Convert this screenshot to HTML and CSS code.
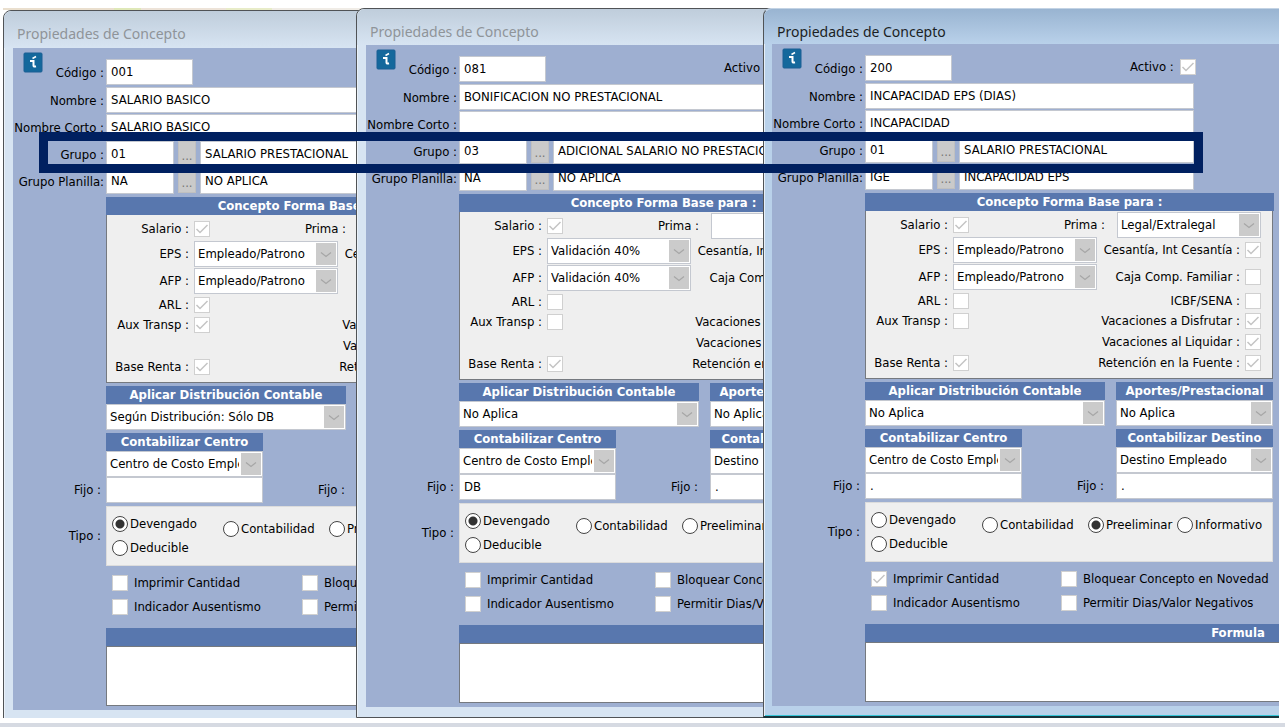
FILE: index.html
```html
<!DOCTYPE html>
<html lang="es">
<head>
    <meta charset="UTF-8">
    <title>Propiedades de Concepto</title>
    <link rel="stylesheet" href="styles.css">
</head>
<body>
<div class="desktop">
    <div class="strip"></div>

    <section class="window first">
        <h2 class="title">Propiedades de Concepto</h2>
        <form class="form">
            <svg class="info" viewBox="0 0 20 21"><rect x="1" y="1" width="18" height="19" rx="1" fill="#14689c" stroke="#1b5f94"/><path d="M9.500 6.500l3.500-2" stroke="#fff" stroke-width="1.500" fill="none"/><path d="M7 9h3.500v4.500q.2 1.500 2.500.8" stroke="#fff" stroke-width="2" fill="none"/></svg>
            <div class="row code">
                <label class="field"><span>Código :</span><input class="mid" type="text" value="001"></label>
            </div>
            <div class="row">
                <label class="field"><span>Nombre :</span><input class="long" type="text" value="SALARIO BASICO"></label>
            </div>
            <div class="row">
                <label class="field"><span>Nombre Corto :</span><input class="long" type="text" value="SALARIO BASICO"></label>
            </div>
            <div class="row">
                <label class="field"><span>Grupo :</span><input class="short" type="text" value="01"></label>
                <button type="button" class="more">...</button>
                <input class="desc" type="text" aria-label="Nombre del grupo" value="SALARIO PRESTACIONAL">
            </div>
            <div class="row">
                <label class="field"><span>Grupo Planilla:</span><input class="short" type="text" value="NA"></label>
                <button type="button" class="more">...</button>
                <input class="desc" type="text" aria-label="Nombre del grupo planilla" value="NO APLICA">
            </div>

            <div class="content">
                <h3 class="head">Concepto Forma Base para :</h3>
                <div class="base">
                    <label class="opt"><span>Salario :</span><input type="checkbox" checked></label>
                    <label class="opt right prima"><span>Prima :</span><select><option>Legal/Extralegal</option></select></label>
                    <label class="opt"><span>EPS :</span><select><option>Empleado/Patrono</option></select></label>
                    <label class="opt right"><span>Cesantía, Int Cesantía :</span><input type="checkbox"></label>
                    <label class="opt"><span>AFP :</span><select><option>Empleado/Patrono</option></select></label>
                    <label class="opt right"><span>Caja Comp. Familiar :</span><input type="checkbox"></label>
                    <label class="opt"><span>ARL :</span><input type="checkbox" checked></label>
                    <label class="opt right"><span>ICBF/SENA :</span><input type="checkbox"></label>
                    <label class="opt"><span>Aux Transp :</span><input type="checkbox" checked></label>
                    <label class="opt right"><span>Vacaciones a Disfrutar :</span><input type="checkbox"></label>
                    <label class="opt right second"><span>Vacaciones al Liquidar :</span><input type="checkbox"></label>
                    <label class="opt"><span>Base Renta :</span><input type="checkbox" checked></label>
                    <label class="opt right"><span>Retención en la Fuente :</span><input type="checkbox"></label>
                </div>
                <div class="pair">
                    <label class="block"><span class="head">Aplicar Distribución Contable</span><select><option>Según Distribución: Sólo DB</option></select></label>
                </div>
                <div class="pair">
                    <label class="block narrow"><span class="head">Contabilizar Centro</span><select><option>Centro de Costo Empleado</option></select></label>
                </div>
            </div>
            <div class="fijo">
                <label><span>Fijo :</span><input type="text"></label>
                <label class="dest"><span>Fijo :</span><input type="text"></label>
            </div>
            <fieldset class="tipo">
                <legend>Tipo :</legend>
                <div class="radios">
                    <div>
                        <label><input type="radio" name="tipo1" checked>Devengado</label>
                        <label><input type="radio" name="tipo1">Deducible</label>
                    </div>
                    <label><input type="radio" name="tipo1">Contabilidad</label>
                    <label><input type="radio" name="tipo1">Preeliminar</label>
                </div>
            </fieldset>
            <div class="content">
                <div class="flags">
                    <label><input type="checkbox">Imprimir Cantidad</label>
                    <label><input type="checkbox">Bloquear Concepto en Novedad</label>
                    <label><input type="checkbox">Indicador Ausentismo</label>
                    <label><input type="checkbox">Permitir Dias/Valor Negativos</label>
                </div>
                <label class="formula"><span class="head">Formula</span><textarea></textarea></label>
            </div>
        </form>
    </section>

    <section class="window middle">
        <h2 class="title">Propiedades de Concepto</h2>
        <form class="form">
            <svg class="info" viewBox="0 0 20 21"><rect x="1" y="1" width="18" height="19" rx="1" fill="#14689c" stroke="#1b5f94"/><path d="M9.500 6.500l3.500-2" stroke="#fff" stroke-width="1.500" fill="none"/><path d="M7 9h3.500v4.500q.2 1.500 2.500.8" stroke="#fff" stroke-width="2" fill="none"/></svg>
            <div class="row code">
                <label class="field"><span>Código :</span><input class="mid" type="text" value="081"></label>
                <label class="activo">Activo : <input type="checkbox" checked></label>
            </div>
            <div class="row">
                <label class="field"><span>Nombre :</span><input class="long" type="text" value="BONIFICACION NO PRESTACIONAL"></label>
            </div>
            <div class="row">
                <label class="field"><span>Nombre Corto :</span><input class="long" type="text"></label>
            </div>
            <div class="row">
                <label class="field"><span>Grupo :</span><input class="short" type="text" value="03"></label>
                <button type="button" class="more">...</button>
                <input class="desc" type="text" aria-label="Nombre del grupo" value="ADICIONAL SALARIO NO PRESTACIONAL">
            </div>
            <div class="row">
                <label class="field"><span>Grupo Planilla:</span><input class="short" type="text" value="NA"></label>
                <button type="button" class="more">...</button>
                <input class="desc" type="text" aria-label="Nombre del grupo planilla" value="NO APLICA">
            </div>

            <div class="content">
                <h3 class="head">Concepto Forma Base para :</h3>
                <div class="base">
                    <label class="opt"><span>Salario :</span><input type="checkbox" checked></label>
                    <label class="opt right prima"><span>Prima :</span><select><option></option></select></label>
                    <label class="opt"><span>EPS :</span><select><option>Validación 40%</option></select></label>
                    <label class="opt right"><span>Cesantía, Int Cesantía :</span><input type="checkbox"></label>
                    <label class="opt"><span>AFP :</span><select><option>Validación 40%</option></select></label>
                    <label class="opt right"><span>Caja Comp. Familiar :</span><input type="checkbox"></label>
                    <label class="opt"><span>ARL :</span><input type="checkbox"></label>
                    <label class="opt right"><span>ICBF/SENA :</span><input type="checkbox"></label>
                    <label class="opt"><span>Aux Transp :</span><input type="checkbox"></label>
                    <label class="opt right"><span>Vacaciones a Disfrutar :</span><input type="checkbox"></label>
                    <label class="opt right second"><span>Vacaciones al Liquidar :</span><input type="checkbox"></label>
                    <label class="opt"><span>Base Renta :</span><input type="checkbox" checked></label>
                    <label class="opt right"><span>Retención en la Fuente :</span><input type="checkbox"></label>
                </div>
                <div class="pair">
                    <label class="block"><span class="head">Aplicar Distribución Contable</span><select><option>No Aplica</option></select></label>
                    <label class="block"><span class="head">Aportes/Prestacional</span><select><option>No Aplica</option></select></label>
                </div>
                <div class="pair">
                    <label class="block narrow"><span class="head">Contabilizar Centro</span><select><option>Centro de Costo Empleado</option></select></label>
                    <label class="block"><span class="head">Contabilizar Destino</span><select><option>Destino Empleado</option></select></label>
                </div>
            </div>
            <div class="fijo">
                <label><span>Fijo :</span><input type="text" value="DB"></label>
                <label class="dest"><span>Fijo :</span><input type="text" value="."></label>
            </div>
            <fieldset class="tipo">
                <legend>Tipo :</legend>
                <div class="radios">
                    <div>
                        <label><input type="radio" name="tipo2" checked>Devengado</label>
                        <label><input type="radio" name="tipo2">Deducible</label>
                    </div>
                    <label><input type="radio" name="tipo2">Contabilidad</label>
                    <label><input type="radio" name="tipo2">Preeliminar</label>
                </div>
            </fieldset>
            <div class="content">
                <div class="flags">
                    <label><input type="checkbox">Imprimir Cantidad</label>
                    <label><input type="checkbox">Bloquear Concepto en Novedad</label>
                    <label><input type="checkbox">Indicador Ausentismo</label>
                    <label><input type="checkbox">Permitir Dias/Valor Negativos</label>
                </div>
                <label class="formula"><span class="head">Formula</span><textarea></textarea></label>
            </div>
        </form>
    </section>

    <section class="window active">
        <h2 class="title">Propiedades de Concepto</h2>
        <form class="form">
            <svg class="info" viewBox="0 0 20 21"><rect x="1" y="1" width="18" height="19" rx="1" fill="#14689c" stroke="#1b5f94"/><path d="M9.500 6.500l3.500-2" stroke="#fff" stroke-width="1.500" fill="none"/><path d="M7 9h3.500v4.500q.2 1.500 2.500.8" stroke="#fff" stroke-width="2" fill="none"/></svg>
            <div class="row code">
                <label class="field"><span>Código :</span><input class="mid" type="text" value="200"></label>
                <label class="activo">Activo : <input type="checkbox" checked></label>
            </div>
            <div class="row">
                <label class="field"><span>Nombre :</span><input class="long" type="text" value="INCAPACIDAD EPS (DIAS)"></label>
            </div>
            <div class="row">
                <label class="field"><span>Nombre Corto :</span><input class="long" type="text" value="INCAPACIDAD"></label>
            </div>
            <div class="row">
                <label class="field"><span>Grupo :</span><input class="short" type="text" value="01"></label>
                <button type="button" class="more">...</button>
                <input class="desc" type="text" aria-label="Nombre del grupo" value="SALARIO PRESTACIONAL">
            </div>
            <div class="row">
                <label class="field"><span>Grupo Planilla:</span><input class="short" type="text" value="IGE"></label>
                <button type="button" class="more">...</button>
                <input class="desc" type="text" aria-label="Nombre del grupo planilla" value="INCAPACIDAD EPS">
            </div>

            <div class="content">
                <h3 class="head">Concepto Forma Base para :</h3>
                <div class="base">
                    <label class="opt"><span>Salario :</span><input type="checkbox" checked></label>
                    <label class="opt right prima"><span>Prima :</span><select><option>Legal/Extralegal</option></select></label>
                    <label class="opt"><span>EPS :</span><select><option>Empleado/Patrono</option></select></label>
                    <label class="opt right"><span>Cesantía, Int Cesantía :</span><input type="checkbox" checked></label>
                    <label class="opt"><span>AFP :</span><select><option>Empleado/Patrono</option></select></label>
                    <label class="opt right"><span>Caja Comp. Familiar :</span><input type="checkbox"></label>
                    <label class="opt"><span>ARL :</span><input type="checkbox"></label>
                    <label class="opt right"><span>ICBF/SENA :</span><input type="checkbox"></label>
                    <label class="opt"><span>Aux Transp :</span><input type="checkbox"></label>
                    <label class="opt right"><span>Vacaciones a Disfrutar :</span><input type="checkbox" checked></label>
                    <label class="opt right second"><span>Vacaciones al Liquidar :</span><input type="checkbox" checked></label>
                    <label class="opt"><span>Base Renta :</span><input type="checkbox" checked></label>
                    <label class="opt right"><span>Retención en la Fuente :</span><input type="checkbox" checked></label>
                </div>
                <div class="pair">
                    <label class="block"><span class="head">Aplicar Distribución Contable</span><select><option>No Aplica</option></select></label>
                    <label class="block"><span class="head">Aportes/Prestacional</span><select><option>No Aplica</option></select></label>
                </div>
                <div class="pair">
                    <label class="block narrow"><span class="head">Contabilizar Centro</span><select><option>Centro de Costo Empleado</option></select></label>
                    <label class="block"><span class="head">Contabilizar Destino</span><select><option>Destino Empleado</option></select></label>
                </div>
            </div>
            <div class="fijo">
                <label><span>Fijo :</span><input type="text" value="."></label>
                <label class="dest"><span>Fijo :</span><input type="text" value="."></label>
            </div>
            <fieldset class="tipo">
                <legend>Tipo :</legend>
                <div class="radios">
                    <div>
                        <label><input type="radio" name="tipo3">Devengado</label>
                        <label><input type="radio" name="tipo3">Deducible</label>
                    </div>
                    <label><input type="radio" name="tipo3">Contabilidad</label>
                    <label><input type="radio" name="tipo3" checked>Preeliminar</label>
                    <label><input type="radio" name="tipo3">Informativo</label>
                </div>
            </fieldset>
            <div class="content">
                <div class="flags">
                    <label><input type="checkbox" checked>Imprimir Cantidad</label>
                    <label><input type="checkbox">Bloquear Concepto en Novedad</label>
                    <label><input type="checkbox">Indicador Ausentismo</label>
                    <label><input type="checkbox">Permitir Dias/Valor Negativos</label>
                </div>
                <label class="formula"><span class="head">Formula</span><textarea></textarea></label>
            </div>
        </form>
    </section>

    <div class="highlight"></div>
</div>
<div class="bottom"></div>
</body>
</html>
```

FILE: styles.css
```css
*{
    margin: 0;
    padding: 0;
    box-sizing: border-box;
}
body{
    display: flex;
    flex-direction: column;
    height: 100vh;
    overflow: hidden;
    background: #fff;
    color: #000;
    font: 13px/16px "DejaVu Sans Condensed", Tahoma, "DejaVu Sans", sans-serif;
}
input,select,textarea,button{
    font: inherit;
    color: inherit;
    border-radius: 0;
}
.desktop{
    position: relative;
    flex: 1;
    margin: 0 6px 5px 0;
    overflow: hidden;
}
.bottom{
    height: 4px;
    background: #d6dae2;
}
.strip{
    height: 10px;
    width: 30%;
    margin-left: 3px;
    border-top: 8px solid #fff;
    background: linear-gradient(90deg, #eadfce 0 29%, #dfe8b8 29% 36%, #ede3d8 36% 58%, #e8ecc8 58% 70%, #f0ece6 70%);
}

/* windows */
.window{
    position: absolute;
    width: 862px;
    padding: 0 9px 10px;
    border: 1px solid #505356;
    border-radius: 8px 8px 0 0;
    background: #d7e4f2;
    box-shadow: inset 1px 1px 0 #eaf1f8;
}
.window.first{
    left: 3px;
    top: 10px;
}
.window.middle{
    left: 356px;
    top: 8px;
}
.window.active{
    left: 763px;
    top: 8px;
    padding: 0 8px 10px;
    background: #b9d1ea;
    border-top-color: #c3d3e4;
    border-bottom: 2px solid #17343c;
    box-shadow: inset 1px 0 0 #e6eff8, inset 0 -1px 0 #35c5d8;
}
.title{
    height: 37px;
    margin: 0 -9px;
    padding: 13px 13px 0;
    border-radius: 8px 8px 0 0;
    background: linear-gradient(#bfcddb, #d7e4f2);
    color: #8f9499;
    font: 14px/20px "Noto Sans", "Open Sans", sans-serif;
}
.active .title{
    height: 35px;
    margin: 0 -8px;
    background: linear-gradient(#99b4d1, #b9d1ea);
    color: #1b1f24;
}
.middle .title{
    height: 36px;
}
.form{
    position: relative;
    height: 662px;
    padding-top: 11px;
    background: #9eafd1;
}
.info{
    position: absolute;
    left: 10px;
    top: 4px;
    width: 20px;
    height: 21px;
}

/* text rows */
.row{
    display: flex;
    align-items: flex-start;
    gap: 4px;
    height: 27px;
}
.row.code{
    height: 28px;
}
.field{
    display: flex;
    align-items: center;
    gap: 2px;
}
.field span{
    width: 91px;
    text-align: right;
    white-space: nowrap;
    padding-top: 2px;
}
input[type=text]{
    height: 26px;
    padding: 0 4px 2px;
    border: 1px solid #c4c8d0;
    background: #fff;
}
input.mid{
    width: 87px;
}
input.long{
    width: 329px;
}
input.short{
    width: 68px;
}
input.desc{
    width: 235px;
}
.more{
    width: 18px;
    height: 25px;
    padding-top: 4px;
    border: 1px solid #c0c0c0;
    background: #cacaca;
    color: #777;
}
.activo{
    display: flex;
    align-items: center;
    gap: 6px;
    height: 24px;
    margin-left: 174px;
}

/* check boxes, radios and drop-downs */
input[type=checkbox]{
    appearance: none;
    flex: none;
    width: 16px;
    height: 16px;
    border: 1px solid #d0d0d0;
    background: #fff;
}
input[type=checkbox]:checked{
    background: #fff url("data:image/svg+xml,%3Csvg xmlns='http://www.w3.org/2000/svg' viewBox='0 0 14 14'%3E%3Cpath d='M1.500 7l3.500 3.500L12.500 3' fill='none' stroke='%23c4c4c4' stroke-width='1.500'/%3E%3C/svg%3E");
}
input[type=radio]{
    appearance: none;
    flex: none;
    width: 16px;
    height: 16px;
    border: 1px solid #444;
    border-radius: 50%;
    background: #fff;
}
input[type=radio]:checked{
    background: radial-gradient(circle, #333 0 4px, #fff 5px);
}
select{
    appearance: none;
    height: 26px;
    padding: 0 23px 0 3px;
    border: 1px solid #c4c8d0;
    background: #fff url("data:image/svg+xml,%3Csvg xmlns='http://www.w3.org/2000/svg' width='20' height='22'%3E%3Cpath fill='%23cbcbcb' d='M0 0h20v22H0z'/%3E%3Cpath d='M5 9.500l5 4 5-4' fill='none' stroke='%23a6a6a6' stroke-width='1.200'/%3E%3C/svg%3E") no-repeat right 1px center;
}

.content{
    margin-left: 93px;
}
.head{
    display: block;
    height: 18px;
    background: #5877ae;
    color: #fff;
    font-weight: bold;
    font-size: 13px;
    line-height: 18px;
    text-align: center;
    white-space: nowrap;
}
h3.head{
    width: 409px;
    margin-top: 2px;
}
.base{
    display: grid;
    grid-template-columns: 231px 164px;
    grid-template-rows: 26px 24px 29px 20px 20px 21px 21px;
    width: 408px;
    height: 168px;
    border: 1px solid #75797f;
    border-top: 0;
    padding-top: 1px;
    background: #efefef;
}
.opt{
    display: flex;
    align-items: center;
    gap: 5px;
    white-space: nowrap;
}
.opt span{
    width: 82px;
    text-align: right;
}
.opt select{
    width: 144px;
    flex: none;
}
.opt.right{
    justify-content: flex-end;
}
.opt.right span{
    width: auto;
}
.opt.prima{
    gap: 12px;
}
.second{
    grid-column: 2;
}
.pair{
    display: grid;
    grid-template-columns: 240px 157px;
    gap: 11px;
    width: 408px;
    margin-top: 3px;
}
.block select{
    display: block;
    width: 100%;
}
.block.narrow{
    width: 157px;
}
.fijo{
    display: flex;
}
.fijo label{
    display: flex;
    align-items: center;
    gap: 5px;
}
.fijo span{
    width: 88px;
    text-align: right;
}
.fijo input{
    width: 157px;
}
.fijo .dest{
    gap: 12px;
}
.fijo .dest span{
    width: 82px;
}
.tipo{
    display: flex;
    align-items: center;
    margin-top: 3px;
    border: 0;
}
.tipo legend{
    float: left;
    width: 93px;
    padding-right: 5px;
    text-align: right;
}
.radios{
    display: grid;
    grid-template-columns: 111px 106px 89px 90px;
    align-items: start;
    width: 408px;
    height: 60px;
    padding: 5px;
    border: 1px solid #dcdcdc;
    background: #efefef;
}
.radios label{
    display: flex;
    align-items: center;
    gap: 2px;
    height: 24px;
}
.radios > label{
    height: 34px;
}
.flags{
    display: grid;
    grid-template-columns: 190px auto;
    grid-auto-rows: 24px;
    padding: 5px 6px 9px;
}
.flags label{
    display: flex;
    align-items: center;
    gap: 6px;
}
.formula{
    display: block;
    width: 746px;
}
.formula textarea{
    display: block;
    width: 100%;
    height: 60px;
    resize: none;
    border: 1px solid #75797f;
    background: #fff;
}

/* marks the Grupo row across the three windows */
.highlight{
    position: absolute;
    left: 39px;
    top: 132px;
    width: 1164px;
    height: 41px;
    border: 9px solid #002060;
    pointer-events: none;
}
```
